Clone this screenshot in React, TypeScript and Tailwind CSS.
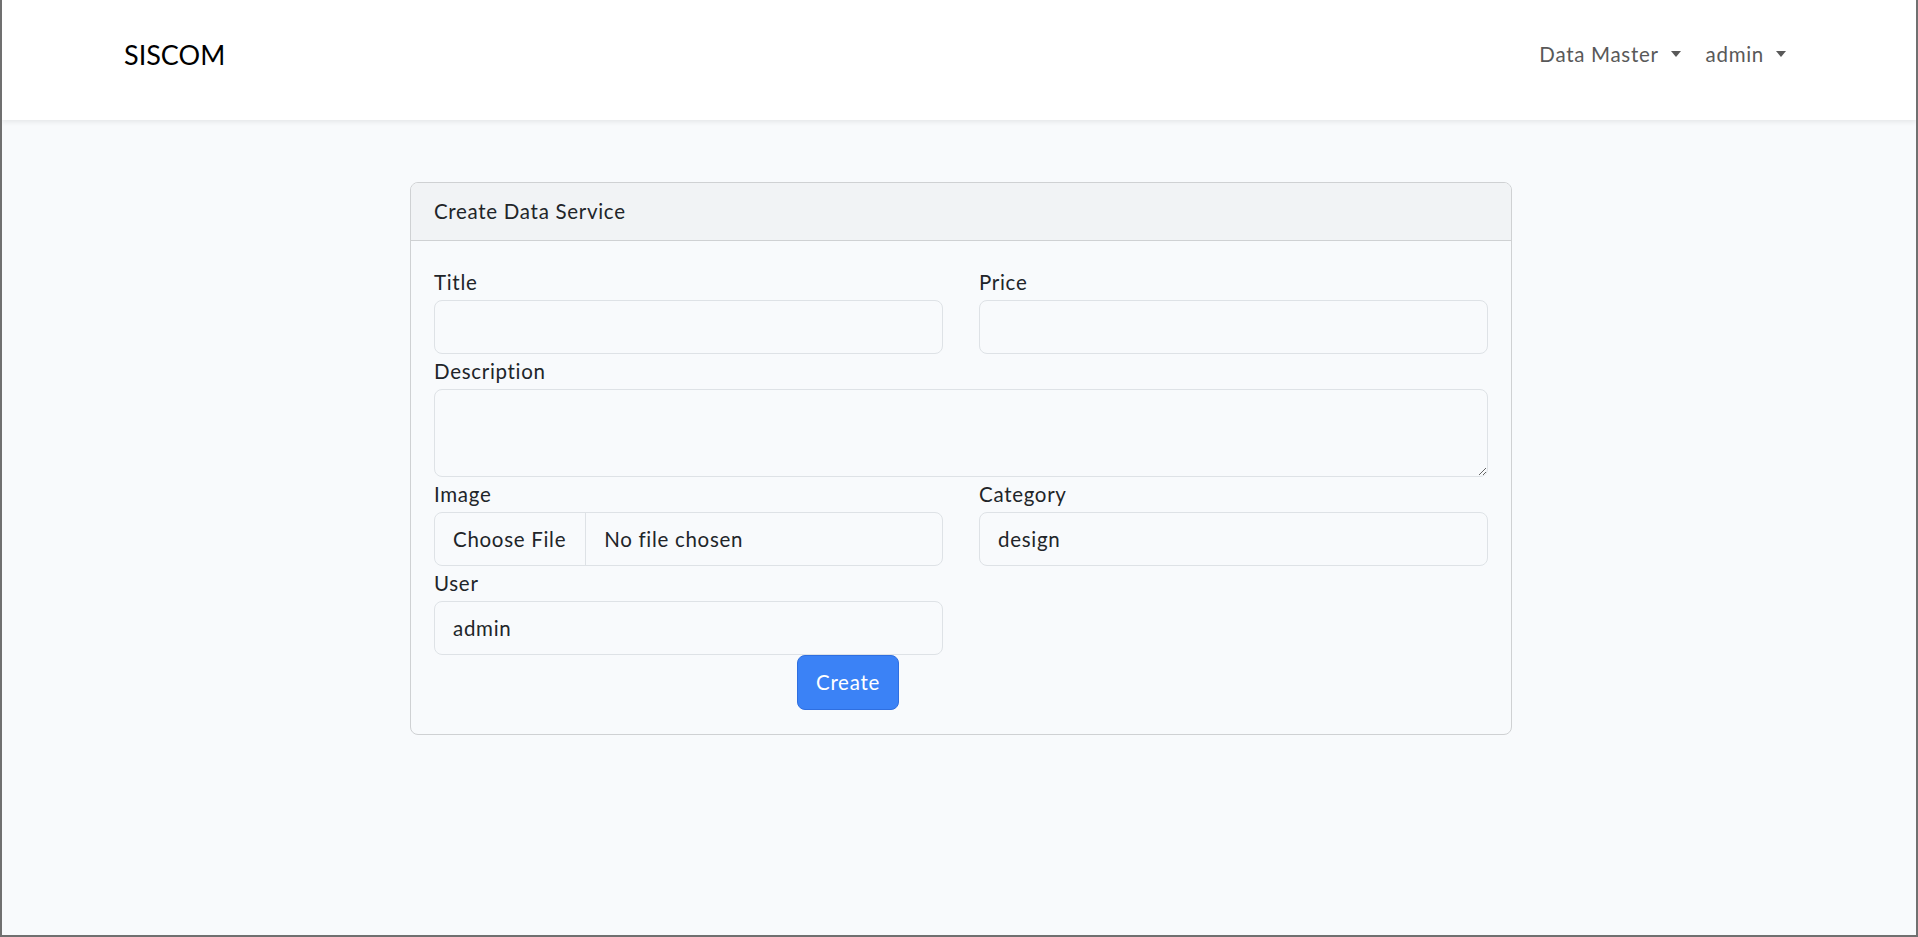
import React from "react";

const font = { fontFamily: "Lato, 'Liberation Sans', sans-serif" };

const Label = ({ children }: { children: React.ReactNode }) => (
  <label className="block pt-[2px] pb-[3px] text-[20.5px] leading-[30px] text-[#212529]">{children}</label>
);

const TextInput = ({ value }: { value?: string }) => (
  <input
    type="text"
    defaultValue={value}
    className="block h-[54px] w-full rounded-[8px] border border-[#dee2e6] bg-transparent px-[18px] text-[20.5px] leading-[30px] tracking-[0.7px] text-[#212529] outline-none"
  />
);

const FileInput = () => (
  <label className="flex h-[54px] w-full items-stretch overflow-hidden rounded-[8px] border border-[#dee2e6] text-[20.5px] leading-[30px] text-[#212529]">
    <input type="file" className="hidden" />
    <span className="flex items-center border-r border-[#dee2e6] pl-[18px] pr-[19px]">Choose File</span>
    <span className="flex items-center pl-[18px]">No file chosen</span>
  </label>
);

const Caret = () => (
  <span className="ml-[12px] mt-[-2px] h-0 w-0 border-x-[5.5px] border-t-[6px] border-x-transparent border-t-[#595959]" />
);

const Navbar = () => (
  <nav className="relative z-10 h-[120px] bg-white shadow-[0_2px_5px_rgba(0,0,0,0.08)]">
    <div className="flex h-[109px] items-center justify-between pl-[122px] pr-[130px]">
      <a className="text-[27px] leading-[40px] tracking-normal text-black">SISCOM</a>
      <ul className="flex items-center text-[20.5px] text-[#595959]">
        <li className="flex items-center pr-[12px]">
          Data Master
          <Caret />
        </li>
        <li className="flex items-center pl-[13px]">
          admin
          <Caret />
        </li>
      </ul>
    </div>
  </nav>
);

const App = () => {
  return (
    <div style={font} className="box-border h-[937px] w-full overflow-hidden border-x-2 border-b-2 border-[#707070] bg-[#f8fafc] tracking-[0.7px]">
      <Navbar />
      <main className="flex justify-center pl-[4px] pt-[62px]">
        <div className="w-[1102px] overflow-hidden rounded-[8px] border border-[#cfd1d3]">
          <div className="flex h-[58px] items-center border-b border-[#cfd1d3] bg-[#f1f3f5] px-[23px] pb-[2px] text-[20.5px] leading-[30px] text-[#212529]">
            Create Data Service
          </div>
          <form className="px-[23px] pt-[24px] pb-[24px]">
            <div className="grid grid-cols-2 gap-x-[36px]">
              <div>
                <Label>Title</Label>
                <TextInput />
              </div>
              <div>
                <Label>Price</Label>
                <TextInput />
              </div>
              <div className="col-span-2">
                <Label>Description</Label>
                <textarea className="block h-[88px] w-full rounded-[8px] border border-[#dee2e6] bg-transparent px-[18px] py-[10px] text-[20.5px] outline-none" />
              </div>
              <div>
                <Label>Image</Label>
                <FileInput />
              </div>
              <div>
                <Label>Category</Label>
                <TextInput value="design" />
              </div>
              <div>
                <Label>User</Label>
                <TextInput value="admin" />
              </div>
            </div>
            <button
              type="button"
              className="ml-[363px] block h-[55px] w-[102px] rounded-[8px] border border-[#2f6fe0] bg-[#3b82f6] text-[20.5px] text-white"
            >
              Create
            </button>
          </form>
        </div>
      </main>
    </div>
  );
};

export default App;
